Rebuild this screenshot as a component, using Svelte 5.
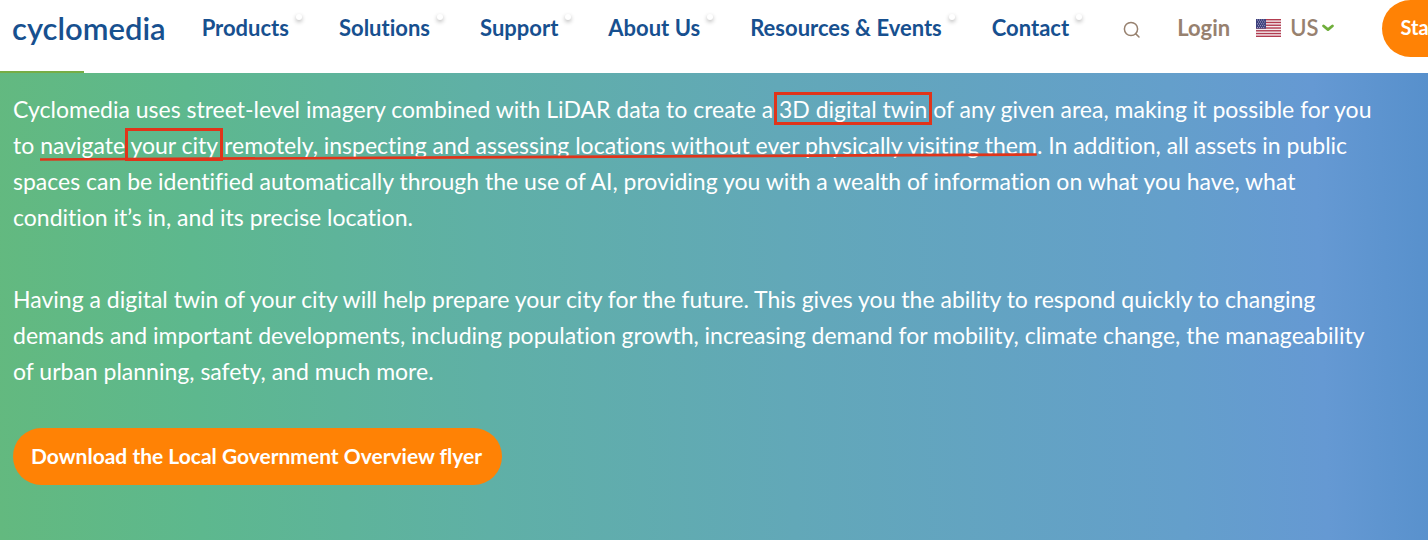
<script lang="ts">
  const links = ["Products", "Solutions", "Support", "About Us", "Resources & Events", "Contact"]
  const stripes = [0, 1, 2, 3, 4, 5, 6]
  const starRows = [0, 1, 2, 3, 4]
</script>

<div class="page">
  <header>
    <a class="logo" href="/">cyclomedia</a>
    <nav>
      {#each links as link}
        <a href="/">{link}<span class="dot"></span></a>
      {/each}
    </nav>
    <button class="search" aria-label="Search">
      <svg width="18" height="18" viewBox="0 0 18 18" fill="none" stroke="#97816f" stroke-width="1.5">
        <circle cx="8" cy="8" r="6.6" />
        <path d="M12.6 12.6L16 16" stroke-linecap="round" />
      </svg>
    </button>
    <a class="login" href="/">Login</a>
    <button class="country">
      <svg width="25" height="18" viewBox="0 0 25 18">
        <rect width="25" height="18" fill="#f4eef0" />
        {#each stripes as s}
          <rect y={s * 2.77} width="25" height="1.4" fill="#b23c50" />
        {/each}
        <rect width="10" height="9.6" fill="#3b3f7c" />
        {#each starRows as row}
          <path d="M{row % 2 ? 2 : 1} {1 + row * 1.9}H9.5" stroke="#d5d3e6" stroke-width="0.8" stroke-dasharray="0.9 1.2" />
        {/each}
      </svg>
      <span>US</span>
      <svg class="chevron" width="12" height="8" viewBox="0 0 12 8" fill="none" stroke="#6fae3a" stroke-width="2.8">
        <path d="M1.6 2L6 5.6L10.4 2" stroke-linecap="round" stroke-linejoin="round" />
      </svg>
    </button>
    <button class="pill start">Sta</button>
    <div class="progress"></div>
  </header>

  <main>
    <p>
      Cyclomedia uses street-level imagery combined with LiDAR data to create a
      <span class="boxed">3D digital twin</span> of any given area, making it possible for you to
      <span class="marked">navigate <span class="boxed">your city</span> remotely, inspecting and assessing locations without ever physically visiting them<svg viewBox="0 0 100 8" preserveAspectRatio="none" aria-hidden="true"><path d="M0 6.5L100 1.5" stroke="#e0341a" stroke-width="2.6" vector-effect="non-scaling-stroke" /></svg></span>.
      In addition, all assets in public spaces can be identified automatically through the use of AI, providing you with a wealth of
      information on what you have, what condition it’s in, and its precise location.
    </p>
    <p>
      Having a digital twin of your city will help prepare your city for the future. This gives you the ability to respond quickly to
      changing demands and important developments, including population growth, increasing demand for mobility, climate change, the
      manageability of urban planning, safety, and much more.
    </p>
    <a class="pill" href="/">Download the Local Government Overview flyer</a>
  </main>
</div>

<style>
  :global(body) {
    margin: 0;
  }

  .page {
    min-height: 100vh;
    display: flex;
    flex-direction: column;
    overflow: hidden;
    font-family: Lato, "Liberation Sans", sans-serif;
    font-variant-ligatures: none;
  }

  a {
    text-decoration: none;
  }

  button {
    border: 0;
    padding: 0;
    background: none;
    font: inherit;
    color: inherit;
    cursor: pointer;
  }

  header {
    position: relative;
    display: flex;
    align-items: center;
    height: 57px;
    padding: 0 0 16px 12px;
    background: #fff;
    color: #97816f;
    font-size: 22px;
    white-space: nowrap;
    overflow: hidden;
  }

  .logo {
    color: #17508f;
    font-size: 31px;
    font-weight: 600;
    line-height: 56px;
    padding-bottom: 2px;
  }

  nav {
    display: flex;
    gap: 50px;
    margin-left: 36px;
    padding-bottom: 2px;
  }

  nav a {
    position: relative;
    color: #17508f;
    font-weight: 700;
  }

  .dot {
    position: absolute;
    top: 0;
    right: -13px;
    width: 6px;
    height: 6px;
    border-radius: 50%;
    background: #fff;
    box-shadow: 0 2px 4px rgba(0, 0, 0, 0.3);
  }

  .search {
    display: flex;
    margin-left: 54px;
    padding-top: 2px;
  }

  .login {
    margin-left: 36px;
    padding-bottom: 2px;
    color: inherit;
    font-weight: 700;
  }

  .country {
    display: flex;
    align-items: center;
    margin-left: 26px;
    padding-bottom: 2px;
    font-weight: 600;
  }

  .country span {
    margin: 0 4px 0 9px;
  }

  .pill {
    display: inline-block;
    padding: 0 20px 2px 18px;
    border-radius: 29px;
    background: #ff8205;
    color: #fff;
    font-size: 21px;
    font-weight: 700;
    line-height: 55px;
  }

  .start {
    flex: none;
    width: 150px;
    margin-left: 48px;
    font-size: 20px;
    text-align: left;
  }

  .progress {
    position: absolute;
    left: 0;
    bottom: 0;
    width: 84px;
    height: 2px;
    background: #76ad45;
  }

  main {
    flex: 1;
    padding: 18px 46px 55px 13px;
    background: linear-gradient(88deg, #63b97f 0%, #5db88e 14%, #5fb0a6 34%, #62a8b8 55%, #649fcb 82%, #6599d3 92%, #5790cc 100%);
    color: #fff;
  }

  p {
    margin: 0 0 46px;
    font-size: 23px;
    line-height: 36px;
  }

  p + p {
    margin-bottom: 39px;
  }

  .boxed,
  .marked {
    position: relative;
    white-space: nowrap;
  }

  .boxed::after {
    content: "";
    position: absolute;
    inset: -3px -5px -2px;
    border: 3px solid #e0341a;
  }

  .marked svg {
    position: absolute;
    left: 0;
    bottom: -2px;
    width: 100%;
    height: 8px;
  }
</style>
